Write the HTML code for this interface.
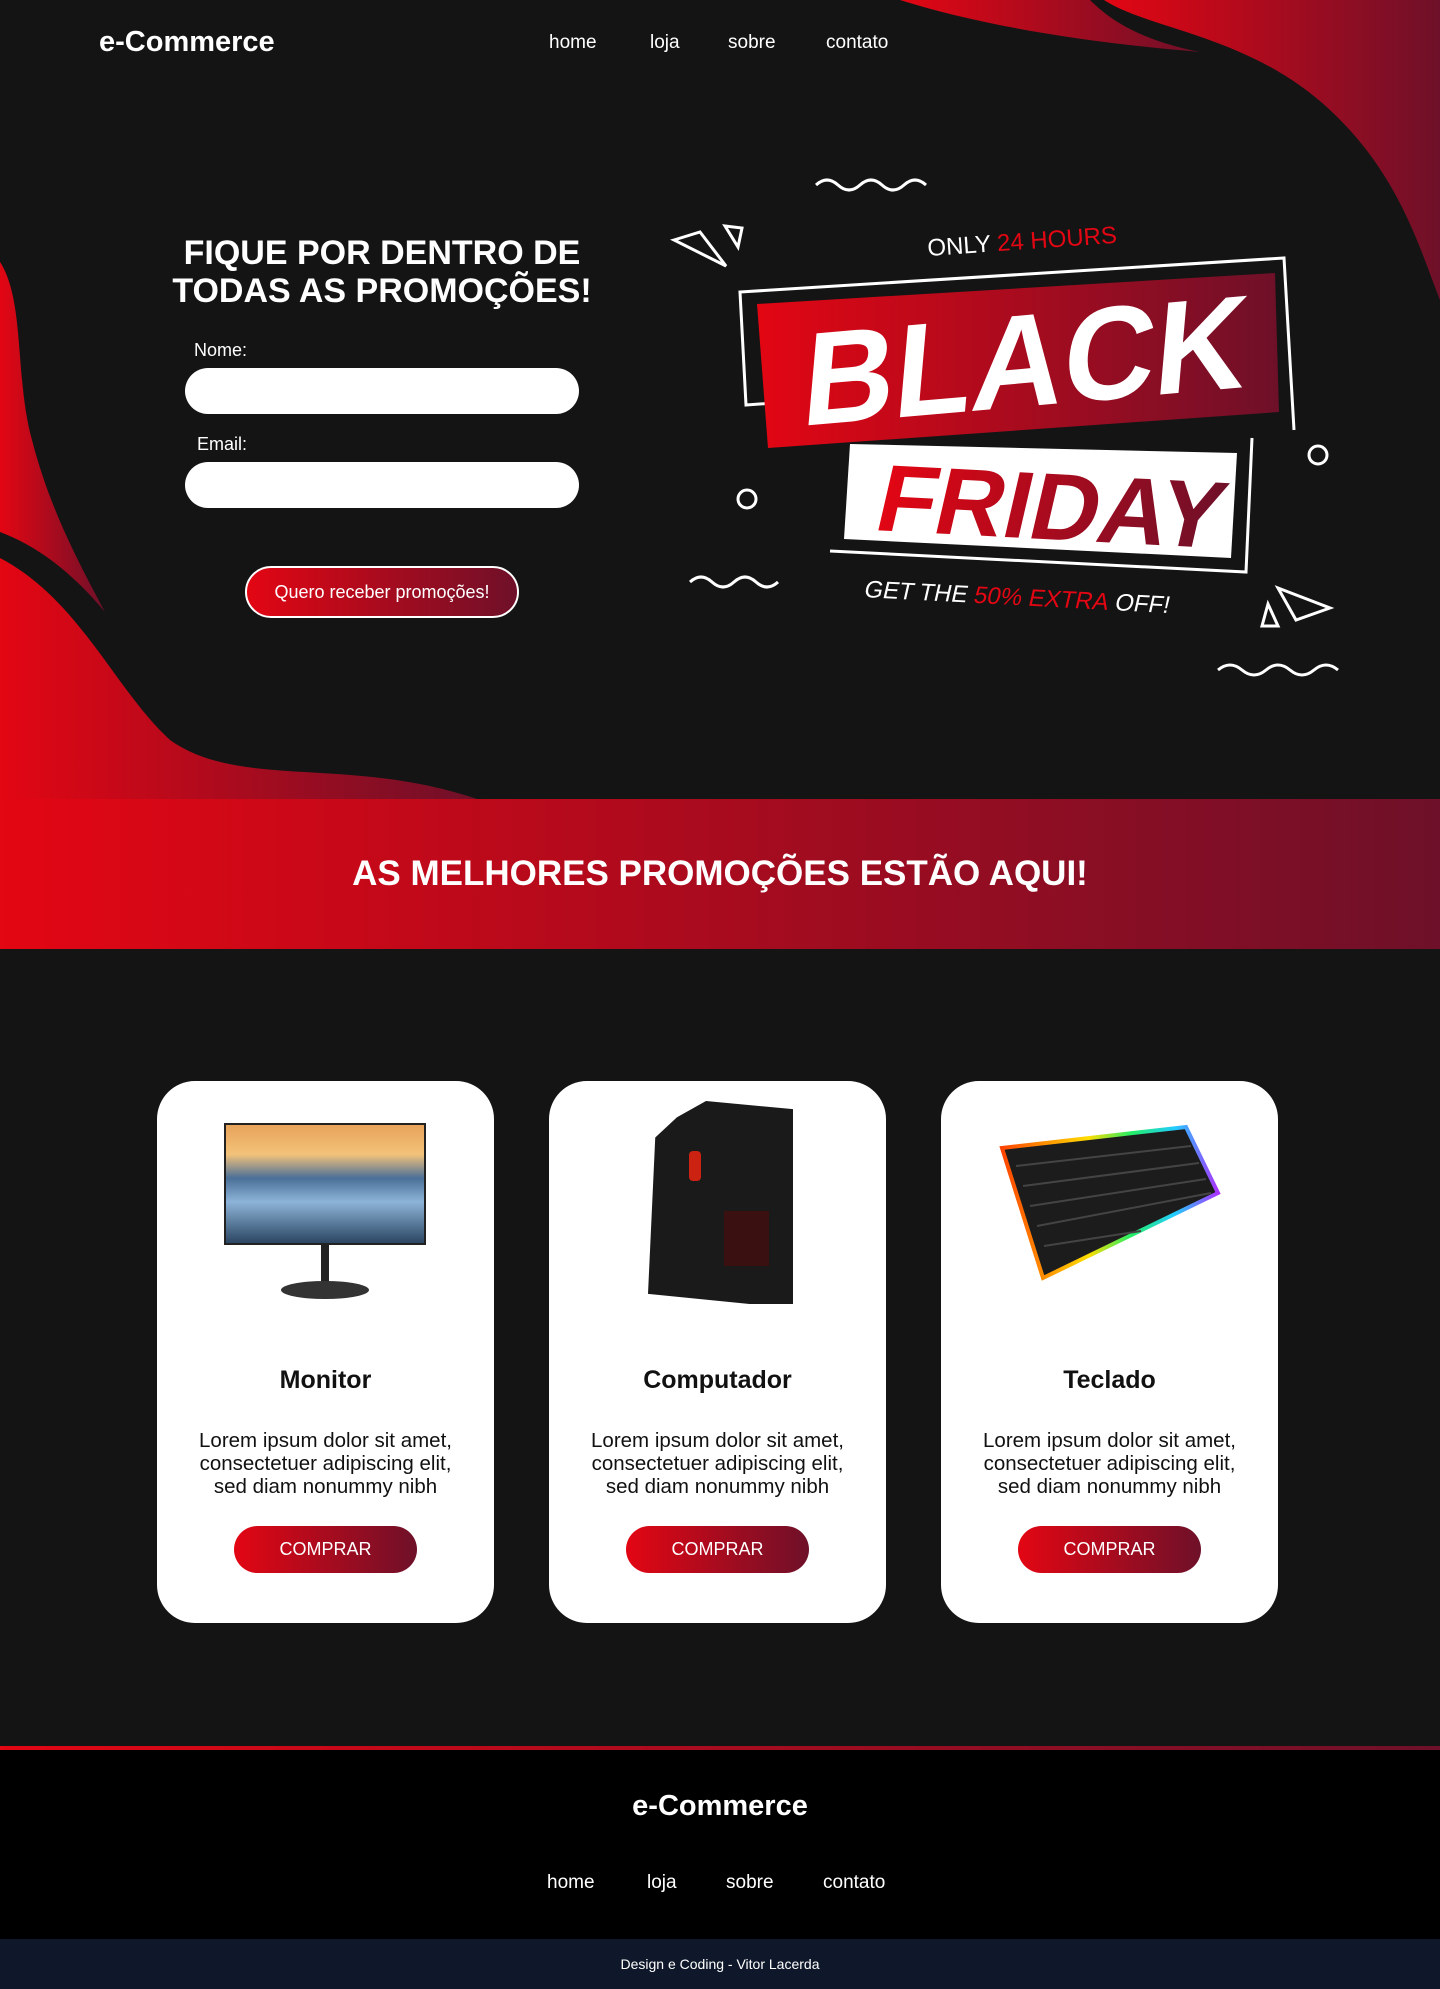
<!DOCTYPE html>
<html><head><meta charset="utf-8"><style>
*{margin:0;padding:0;box-sizing:border-box}
body{width:1440px;height:1989px;background:#141414;font-family:"Liberation Sans",sans-serif;color:#fff;position:relative;overflow:hidden}
.abs{position:absolute}
.logo{font-weight:bold;font-size:29px}
.nav a{position:absolute;color:#fff;text-decoration:none;font-size:19px}
.grad{background:linear-gradient(90deg,#e30613,#6e1029)}
.card{position:absolute;top:1081px;width:337px;height:542px;background:#fff;border-radius:38px;color:#111;text-align:center}
.card h3{position:absolute;top:285px;width:100%;font-size:25px}
.card p{position:absolute;top:348px;width:100%;font-size:20.5px;line-height:23px}
.card .b{position:absolute;left:77px;top:445px;width:183px;height:47px;border-radius:24px;color:#fff;font-size:18px;line-height:47px}
input{position:absolute;left:185px;width:394px;height:46px;border:none;border-radius:23px;background:#fff}
</style></head><body>
<svg class="abs" style="left:0;top:0" width="1440" height="800">
<defs><linearGradient id="r" x1="0" x2="1"><stop offset="0" stop-color="#e30613"/><stop offset="1" stop-color="#6e1029"/></linearGradient></defs>
<path d="M900,0 C980,25 1080,42 1200,52 C1140,40 1110,20 1090,0 Z" fill="url(#r)"/>
<path d="M1104,0 C1150,30 1250,35 1330,110 C1400,175 1420,250 1440,300 L1440,0 Z" fill="url(#r)"/>
<path d="M0,262 C25,300 15,380 32,440 C50,510 80,565 105,612 C70,570 35,545 0,532 Z" fill="url(#r)"/>
<path d="M0,558 C80,600 115,690 170,740 C240,790 350,755 480,800 L0,800 Z" fill="url(#r)"/>
</svg>
<div class="abs logo" style="left:99px;top:26px">e-Commerce</div>
<div class="nav"><a style="left:549px;top:32px">home</a><a style="left:650px;top:32px">loja</a><a style="left:728px;top:32px">sobre</a><a style="left:826px;top:32px">contato</a></div>

<div class="abs" style="left:140px;top:234px;width:484px;text-align:center;font-weight:bold;font-size:34px;line-height:38px">FIQUE POR DENTRO DE<br>TODAS AS PROMOÇÕES!</div>
<div class="abs" style="left:194px;top:340px;font-size:18px">Nome:</div>
<input style="top:368px">
<div class="abs" style="left:197px;top:434px;font-size:18px">Email:</div>
<input style="top:462px">
<div class="abs grad" style="left:245px;top:566px;width:274px;height:52px;border:2px solid #fff;border-radius:26px;text-align:center;line-height:48px;font-size:18px">Quero receber promoções!</div>

<svg class="abs" style="left:0;top:0" width="1440" height="800">
<defs><linearGradient id="r2" x1="0" x2="1"><stop offset="0" stop-color="#e30613"/><stop offset="1" stop-color="#6e1029"/></linearGradient></defs>
<g fill="none" stroke="#fff" stroke-width="3">
<path d="M816,185 q11,-10 22,0 t22,0 t22,0 t22,0 t22,0"/>
<path d="M690,582 q11,-10 22,0 t22,0 t22,0 t22,0"/>
<path d="M1218,670 q12,-10 24,0 t24,0 t24,0 t24,0 t24,0"/>
<path d="M674,240 L700,232 L726,266 Z"/><path d="M725,226 L742,228 L738,247 Z"/>
<path d="M1262,626 L1268,604 L1278,626 Z"/><path d="M1278,588 L1330,608 L1296,620 Z"/>
<circle cx="747" cy="499" r="9"/><circle cx="1318" cy="455" r="9"/>
<path d="M828,399 L746,405 L740,292 L1284,258 L1294,430"/>
<path d="M830,551 L1246,572 L1252,438"/>
</g>
<polygon points="757,304 1275,273 1279,412 768,448" fill="url(#r2)"/>
<polygon points="850,444 1237,453 1231,558 844,539" fill="#fff"/>
<text transform="translate(800,426) rotate(-5) skewX(-10)" font-family="Liberation Sans" font-weight="bold" font-size="132" fill="#fff" textLength="445" lengthAdjust="spacingAndGlyphs">BLACK</text>
<text transform="translate(872,530) rotate(3) skewX(-10)" font-family="Liberation Sans" font-weight="bold" font-size="95" fill="url(#r2)" textLength="345" lengthAdjust="spacingAndGlyphs">FRIDAY</text>
<text transform="translate(928,256) rotate(-4)" font-size="24" fill="#fff">ONLY <tspan fill="#e30613">24 HOURS</tspan></text>
<text transform="translate(863,597) rotate(3) skewX(-10)" font-size="24" fill="#fff">GET THE <tspan fill="#e30613">50% EXTRA</tspan> OFF!</text>
</svg>

<div class="abs grad" style="left:0;top:799px;width:1440px;height:150px;text-align:center;line-height:150px;font-weight:bold;font-size:35px">AS MELHORES PROMOÇÕES ESTÃO AQUI!</div>

<div class="card" style="left:157px">
<div class="abs" style="left:67px;top:42px;width:202px;height:122px;background:#222;padding:2px"><div style="width:100%;height:100%;background:linear-gradient(180deg,#e8a35a 0%,#f3c27a 25%,#4a6f98 45%,#8db4d8 65%,#2b4663 100%)"></div></div>
<div class="abs" style="left:164px;top:164px;width:8px;height:42px;background:#222"></div>
<div class="abs" style="left:124px;top:200px;width:88px;height:18px;border-radius:50%;background:#333"></div>
<h3>Monitor</h3>
<p>Lorem ipsum dolor sit amet,<br>consectetuer adipiscing elit,<br>sed diam nonummy nibh</p>
<div class="b grad">COMPRAR</div></div>

<div class="card" style="left:549px">
<div class="abs" style="left:99px;top:20px;width:145px;height:203px;background:#1a1a1a;clip-path:polygon(20% 8%,40% 0,100% 4%,100% 100%,70% 100%,0 95%,5% 18%)"></div>
<div class="abs" style="left:140px;top:70px;width:12px;height:30px;background:#c21;border-radius:4px"></div>
<div class="abs" style="left:175px;top:130px;width:45px;height:55px;background:#3a1010"></div>
<h3>Computador</h3>
<p>Lorem ipsum dolor sit amet,<br>consectetuer adipiscing elit,<br>sed diam nonummy nibh</p>
<div class="b grad">COMPRAR</div></div>

<div class="card" style="left:941px">
<svg class="abs" style="left:0;top:0" width="337" height="240">
<defs><linearGradient id="rb" x1="0" x2="1"><stop offset="0" stop-color="#f40"/><stop offset=".4" stop-color="#fd0"/><stop offset=".6" stop-color="#2e6"/><stop offset=".8" stop-color="#2cf"/><stop offset="1" stop-color="#a3f"/></linearGradient></defs>
<polygon points="61,67 245,46 277,112 102,197" fill="#1c1c1c" stroke="url(#rb)" stroke-width="4"/>
<g stroke="#444" stroke-width="2"><path d="M75,85 L250,65 M82,105 L258,82 M89,125 L265,98 M96,145 L270,112 M103,165 L200,150"/></g>
</svg>
<h3>Teclado</h3>
<p>Lorem ipsum dolor sit amet,<br>consectetuer adipiscing elit,<br>sed diam nonummy nibh</p>
<div class="b grad">COMPRAR</div></div>

<div class="abs grad" style="left:0;top:1746px;width:1440px;height:4px"></div>
<div class="abs" style="left:0;top:1750px;width:1440px;height:189px;background:#000"></div>
<div class="abs logo" style="left:0;top:1790px;width:1440px;text-align:center">e-Commerce</div>
<div class="nav"><a style="left:547px;top:1872px">home</a><a style="left:647px;top:1872px">loja</a><a style="left:726px;top:1872px">sobre</a><a style="left:823px;top:1872px">contato</a></div>
<div class="abs" style="left:0;top:1939px;width:1440px;height:50px;background:#0f172a;text-align:center;line-height:50px;font-size:14px">Design e Coding - Vitor Lacerda</div>
</body></html>
